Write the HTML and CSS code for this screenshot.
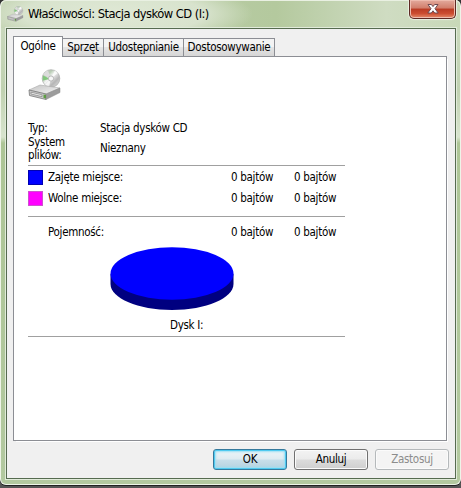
FILE: index.html
```html
<!DOCTYPE html>
<html lang="pl">
<head>
<meta charset="utf-8">
<title>Właściwości: Stacja dysków CD (I:)</title>
<link rel="stylesheet" href="styles.css">
</head>
<body>
<svg class="defs" width="0" height="0" aria-hidden="true">
  <defs>
    <linearGradient id="disc" x1="0" y1="0" x2="1" y2="1">
      <stop offset="0" stop-color="#c8c8c8"/><stop offset=".3" stop-color="#b9cdb5"/>
      <stop offset=".45" stop-color="#f5f5f5"/><stop offset=".7" stop-color="#b5b5b5"/><stop offset="1" stop-color="#e8e8e8"/>
    </linearGradient>
    <linearGradient id="top" x1="0" y1="0" x2="1" y2="1">
      <stop offset="0" stop-color="#c4c4c4"/><stop offset="1" stop-color="#f4f4f4"/>
    </linearGradient>
    <symbol id="drive" viewBox="0 0 34 32">
      <circle cx="23" cy="9.5" r="8.8" fill="url(#disc)" stroke="#a9aaa9" stroke-width=".7"/>
      <path d="M23 9.5L15 6Q17 2 20 1.6Z" fill="#dcdcdc"/>
      <path d="M22 10L14.8 11.5L15 6.5Z" fill="#83c77d"/>
      <path d="M23 9.5L27 1.5L30 4ZM23 9.5L21 18L17 16Z" fill="#fff" opacity=".75"/>
      <circle cx="23" cy="9.5" r="2.6" fill="#f7f7f7" stroke="#a0a0a0" stroke-width=".7"/>
      <path d="M1 21L12 16L32 19L18 25Z" fill="url(#top)" stroke="#aaa" stroke-width=".6"/>
      <path d="M1 21L18 25V30.5L1.5 26.5Z" fill="#c9c9c9" stroke="#777" stroke-width=".8"/>
      <path d="M18 25L32 19V23.5L18 30.5Z" fill="#9c9c9c" stroke="#888" stroke-width=".5"/>
      <path d="M3 23.2L14 25.8V27.6L3 25Z" fill="#eee" stroke="#777" stroke-width=".6"/>
      <path d="M15.5 25.5L18 26V29.5L15.5 29Z" fill="#5d9c43"/>
    </symbol>
  </defs>
</svg>
<div class="window">
  <header class="titlebar">
    <svg class="title-icon"><use href="#drive"/></svg>
    <h1 class="title">Właściwości: Stacja dysków CD (I:)</h1>
    <button class="close" aria-label="Zamknij">
      <svg width="14" height="12" viewBox="0 0 14 12"><path d="M2 1.5H5.4L7 3.6L8.6 1.5H12L9 5.7L12.2 10H8.7L7 7.8L5.3 10H1.8L5 5.7Z" fill="#fff" stroke="#6d4a51"/></svg>
    </button>
  </header>
  <main class="client">
    <nav class="tabs">
      <button class="tab active">Ogólne</button>
      <button class="tab hardware">Sprzęt</button>
      <button class="tab sharing">Udostępnianie</button>
      <button class="tab custom">Dostosowywanie</button>
    </nav>
    <section class="panel">
      <svg class="drive-icon"><use href="#drive"/></svg>
      <div class="details">
        <span>Typ:</span><span>Stacja dysków CD</span>
        <span>System<br>plików:</span><span>Nieznany</span>
      </div>
      <div class="usage">
        <div class="row"><i class="swatch used"></i><span>Zajęte miejsce:</span><span>0 bajtów</span><span>0 bajtów</span></div>
        <div class="row"><i class="swatch free"></i><span>Wolne miejsce:</span><span>0 bajtów</span><span>0 bajtów</span></div>
      </div>
      <div class="capacity">
        <div class="row"><i></i><span>Pojemność:</span><span>0 bajtów</span><span>0 bajtów</span></div>
        <svg class="pie" width="124" height="64" viewBox="0 0 124 64">
          <path d="M.5 27V37C.5 51.2 28 63 62 63S123.500 51.2 123.500 37V27Z" fill="#000080"/>
          <ellipse cx="62" cy="26.500" rx="61.500" ry="26.300" fill="#00f"/>
        </svg>
        <div class="disk-label">Dysk I:</div>
      </div>
    </section>
    <footer class="actions">
      <button class="btn default">OK</button>
      <button class="btn">Anuluj</button>
      <button class="btn" disabled>Zastosuj</button>
    </footer>
  </main>
</div>
</body>
</html>
```
FILE: styles.css
```css
* { box-sizing: border-box; }
body {
  margin: 0;
  height: 488px;
  overflow: hidden;
  background: linear-gradient(#333 0 8px, #e4eddb 8px 470px, #555 480px);
  color: #000;
  font: 11.5px/13px "DejaVu Sans Condensed", "DejaVu Sans", sans-serif;
  font-stretch: condensed;
  letter-spacing: -.3px;
}
button { font: inherit; font-stretch: inherit; letter-spacing: inherit; color: inherit; padding: 0; }
.defs { position: absolute; }
.window {
  width: 461px;
  height: 485px;
  padding: 0 5px 6px 6px;
  border: 1px solid #eef4e8;
  border-top: 0;
  border-radius: 6px;
  background:
    radial-gradient(140px 32px at 112px 14px, #dfe8d5 0, #d8e3cd 65%, transparent) 0 0 / 100% 28px no-repeat,
    linear-gradient(90deg, #bfd0ad 0, #b4c99e 60%, #cfdcc2 84%, #c8d8b8) 0 0 / 100% 28px no-repeat,
    linear-gradient(#c9d8bc 28px, #c0d1b1 90px, #d8e4ce 137px, #adc596 143px, #b3c9a0 100%);
  box-shadow: inset 0 1px #e9f0e2, 0 1px 0 #222;
}
.titlebar { height: 28px; display: flex; align-items: flex-start; }
.title-icon { width: 17px; height: 16px; margin: 6px 4px 0 0; }
.title {
  margin: 6px 0 0;
  font-size: 12.8px;
  line-height: 16px;
  font-weight: 400;
  white-space: nowrap;
  letter-spacing: -.54px;
}
.close {
  width: 47px;
  height: 19px;
  margin: 0 -1px 0 auto;
  border: 1px solid #5e2923;
  border-top: 0;
  border-radius: 0 0 5px 5px;
  background: linear-gradient(#e3aa9d, #d17e6b 45%, #b93b24 50%, #cc4d31 75%, #e58d6b);
  box-shadow: inset 0 0 0 1px #eebcaf, 0 0 1px 1px #e9f0e3;
  display: grid;
  place-items: center;
}
.client {
  height: 451px;
  margin: 0 -1px;
  border: 1px solid #566b50;
  background: #f0f0f0;
  padding: 7px 7px 0 6px;
  box-shadow: 0 0 0 1px #e1ebda;
}
.tabs { height: 21px; display: flex; align-items: flex-end; position: relative; }
.tab {
  height: 19px;
  border: 1px solid #8c8e94;
  border-left-width: 0;
  background: linear-gradient(#f3f3f3 0 45%, #e4e4e4 50%, #d6d6d6);
  white-space: nowrap;
}
.tab.active {
  width: 50px;
  height: 21px;
  padding-bottom: 2px;
  border-left-width: 1px;
  border-bottom: 0;
  background: #fff;
}
.hardware { width: 41px; }
.sharing { width: 80px; }
.custom { width: 91px; }
.panel {
  width: 434px;
  height: 385px;
  margin-top: -1px;
  border: 1px solid #8c8e94;
  background: #fff;
  box-shadow: 2px 2px 0 -1px #fff;
  padding: 12px 0 0 14px;
}
.drive-icon { display: block; width: 34px; height: 32px; }
.details {
  width: 317px;
  height: 45px;
  margin-top: 20px;
  display: grid;
  grid-template-columns: 72px 1fr;
  grid-template-rows: 14px 27px;
  align-items: center;
  line-height: 13px;
  border-bottom: 1px solid #a0a0a0;
}
.usage { width: 317px; height: 51px; padding-top: 1px; border-bottom: 1px solid #a0a0a0; }
.row {
  height: 21px;
  display: grid;
  grid-template-columns: 20px 183px 63px 1fr;
  align-items: center;
  white-space: nowrap;
}
.swatch { width: 15px; height: 15px; border: 1px solid #0000b0; background: #00f; }
.swatch.free { border-color: #d050d0; background: #f0f; }
.capacity { width: 317px; height: 120px; padding-top: 5px; border-bottom: 1px solid #a0a0a0; }
.pie { display: block; margin: 4px 0 0 82px; }
.disk-label { margin: 8px 0 0 142px; }
.actions { display: flex; justify-content: flex-end; gap: 7px; padding-top: 8px; margin-right: -1px; }
.btn {
  width: 74px;
  height: 21px;
  border: 1px solid #707070;
  border-radius: 3px;
  background: linear-gradient(#f3f3f3, #ebebeb 48%, #dcdcdc 52%, #cfcfcf);
  box-shadow: inset 0 0 0 1px #fbfbfb;
}
.btn.default {
  border-color: #35799c;
  background: linear-gradient(#edf5f8, #deebf1 48%, #c8dfea 52%, #b4d1df);
  box-shadow: inset 0 0 0 1px #4fcaf0, inset 0 0 2px 2px #9ddff3;
}
.btn:disabled { color: #8c8c8c; border-color: #b5b9bb; background: #f4f4f4; }
```
